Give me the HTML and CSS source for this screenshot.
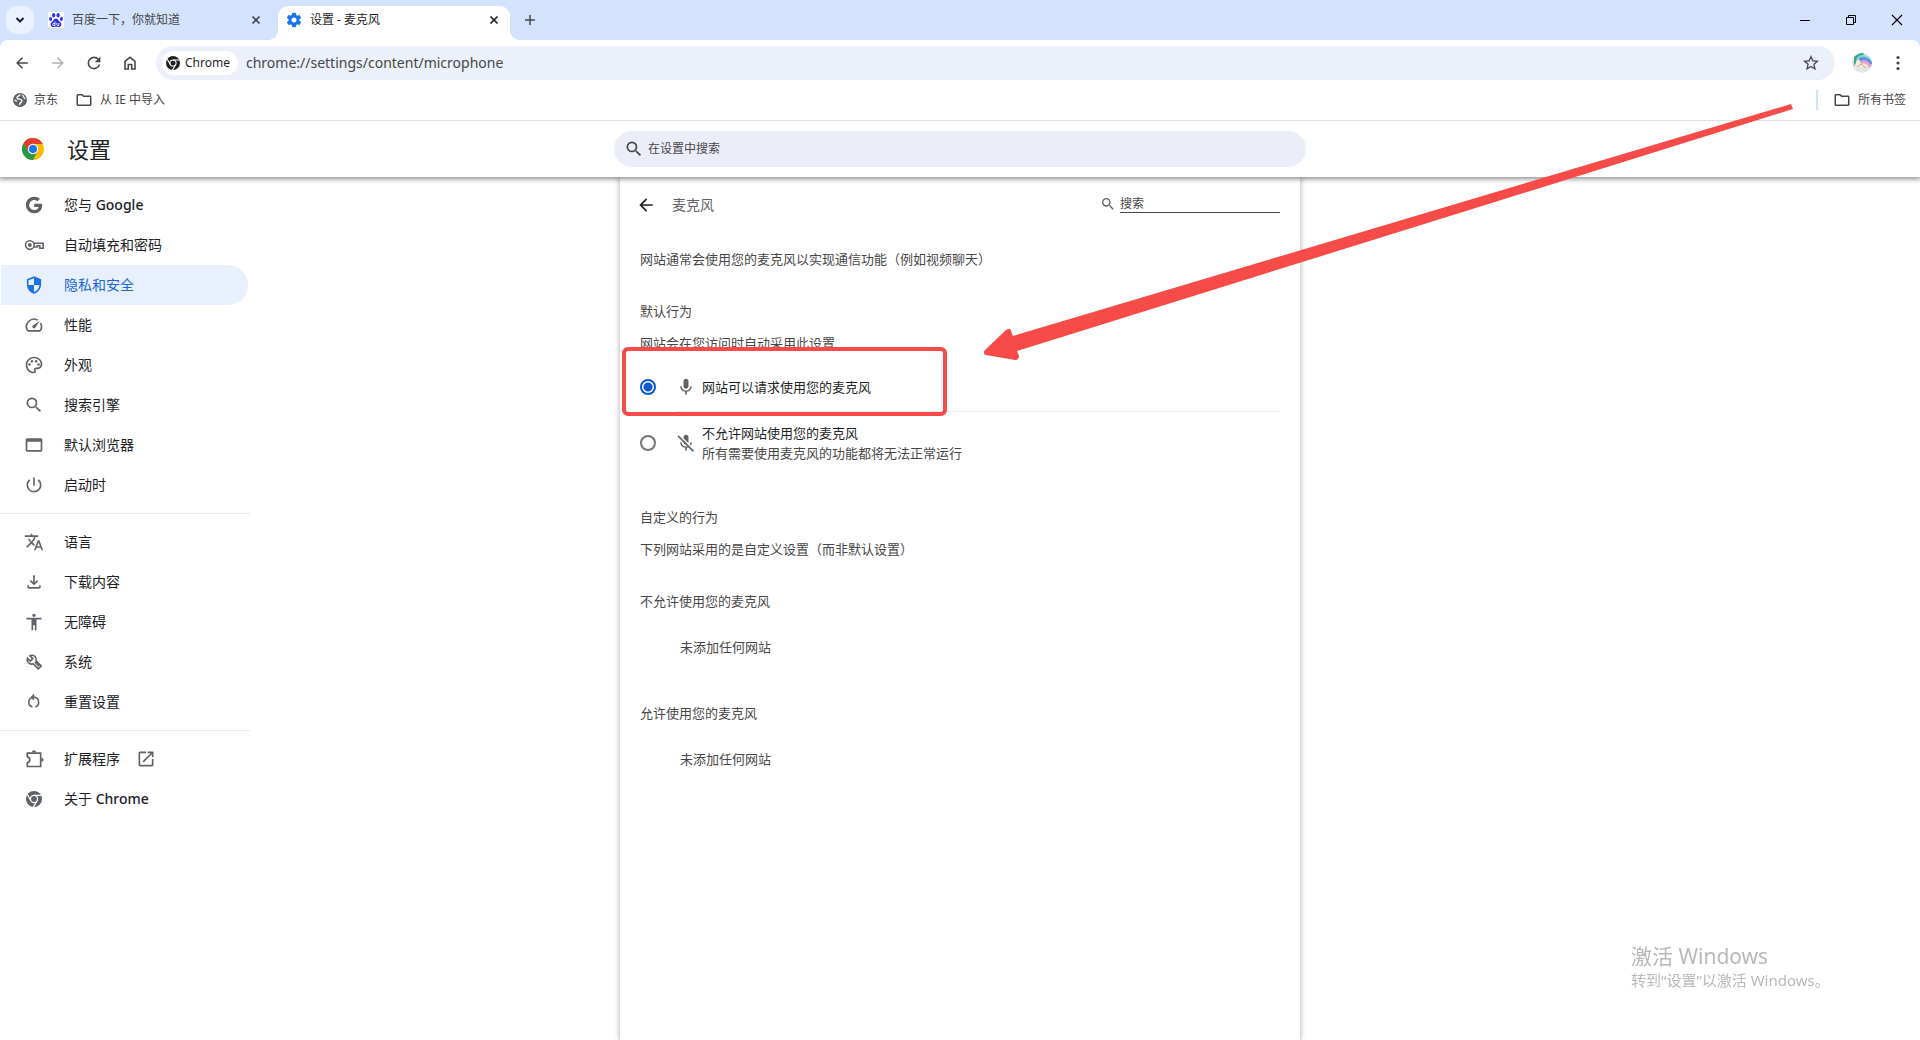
FILE: index.html
```html
<!DOCTYPE html>
<html lang="zh-CN">
<head>
<meta charset="utf-8">
<title>设置 - 麦克风</title>
<link rel="stylesheet" href="styles.css">
</head>
<body>
<svg class="defs" aria-hidden="true">
  <symbol id="close" viewBox="0 0 16 16"><path d="M4.500 4.500l7 7M11.500 4.500l-7 7" fill="none" stroke="currentColor" stroke-width="1.700"/></symbol>
  <symbol id="arrow" viewBox="0 0 24 24"><path d="M20 11H7.830l5.590-5.590L12 4l-8 8 8 8 1.410-1.410L7.830 13H20v-2z"/></symbol>
  <symbol id="search" viewBox="0 0 24 24"><path d="M15.500 14h-.79l-.28-.27A6.470 6.470 0 0 0 16 9.500 6.500 6.500 0 1 0 9.500 16c1.610 0 3.090-.59 4.230-1.570l.27.28v.79l5 4.990L20.490 19l-4.990-5zm-6 0C7.010 14 5 11.990 5 9.500S7.010 5 9.500 5 14 7.010 14 9.500 11.990 14 9.500 14z"/></symbol>
  <symbol id="folder" viewBox="0 0 24 24"><path d="M9.170 6l2 2H20v10H4V6h5.170M10 4H4c-1.100 0-2 .9-2 2v12c0 1.100.9 2 2 2h16c1.100 0 2-.9 2-2V8c0-1.100-.9-2-2-2h-8l-2-2z"/></symbol>
  <symbol id="chrome" viewBox="0 0 24 24"><circle cx="12" cy="12" r="12"/><g fill="none" stroke="#fff" stroke-width="1.800"><circle cx="12" cy="12" r="5.300"/><path d="M12 6.700h11M7.400 14.650L1.900 5.100M16.600 14.650L11.100 24.200"/></g></symbol>
  <symbol id="mic" viewBox="0 0 24 24"><path d="M12 14c1.660 0 3-1.340 3-3V5c0-1.660-1.340-3-3-3S9 3.340 9 5v6c0 1.660 1.340 3 3 3zm5.300-3c0 3-2.540 5.100-5.300 5.100S6.700 14 6.700 11H5c0 3.410 2.720 6.230 6 6.720V21h2v-3.280c3.280-.48 6-3.300 6-6.720h-1.700z"/></symbol>
</svg>

<header class="browser">
  <div class="tabstrip">
    <button class="tab-search" aria-label="搜索标签页"><svg class="i16" viewBox="0 0 16 16"><path d="M4.500 6l3.500 3.500L11.500 6" fill="none" stroke="currentColor" stroke-width="2"/></svg></button>
    <div class="tab">
      <svg class="i16" viewBox="0 0 16 16"><rect width="16" height="16" rx="1" fill="#fff"/><g fill="#2932e1"><ellipse cx="5.700" cy="3.300" rx="1.600" ry="2.300"/><ellipse cx="10.100" cy="3.300" rx="1.600" ry="2.300"/><ellipse cx="2.600" cy="7" rx="1.500" ry="2.100"/><ellipse cx="13.400" cy="7" rx="1.500" ry="2.100"/><path d="M8 6.500c1.500 0 2 1.400 3 2.400 1 1 2.600 2 2.300 3.800-.3 2-2 2.400-3 2.300-1.500-.2-3-.2-4.500 0-1.300.2-3-.4-3.200-2.300-.2-1.800 1.300-2.700 2.300-3.800 1-1 1.600-2.400 3.100-2.400z"/></g><path d="M7 9.500v4H5.800a1 1 0 0 1 0-2.200H7M8.800 11v1.700q0 .9 1 .9h1V11" fill="none" stroke="#fff" stroke-width=".9"/></svg>
      <span class="tab-title">百度一下，你就知道</span>
      <button class="plain" aria-label="关闭"><svg class="i16"><use href="#close"/></svg></button>
    </div>
    <div class="tab tab-active">
      <svg class="i16 gear" viewBox="1 1 22 22"><path d="M19.430 12.980c.04-.32.070-.64.070-.98s-.03-.66-.07-.98l2.110-1.650c.19-.15.240-.42.120-.64l-2-3.460c-.12-.22-.39-.3-.61-.22l-2.490 1c-.52-.4-1.080-.73-1.690-.98l-.38-2.650A.49.490 0 0 0 14 2h-4c-.25 0-.46.180-.49.420l-.38 2.650c-.61.250-1.170.59-1.690.98l-2.490-1c-.23-.09-.49 0-.61.220l-2 3.460c-.13.220-.07.49.120.64l2.110 1.650c-.04.320-.07.650-.07.980s.03.660.070.980l-2.110 1.650c-.19.150-.24.420-.12.640l2 3.460c.12.220.39.300.61.220l2.490-1c.52.400 1.080.73 1.690.98l.38 2.650c.03.240.24.420.49.420h4c.25 0 .46-.18.49-.42l.38-2.650c.61-.25 1.170-.59 1.690-.98l2.490 1c.23.090.49 0 .61-.22l2-3.460c.12-.22.070-.49-.12-.64l-2.110-1.650zM12 15.500c-1.930 0-3.500-1.570-3.500-3.500s1.570-3.500 3.500-3.500 3.500 1.570 3.500 3.500-1.570 3.500-3.500 3.500z"/></svg>
      <span class="tab-title">设置 - 麦克风</span>
      <button class="plain" aria-label="关闭"><svg class="i16"><use href="#close"/></svg></button>
    </div>
    <button class="plain new-tab" aria-label="打开新的标签页"><svg class="i16" viewBox="0 0 16 16"><path d="M8 3v10M3 8h10" stroke="currentColor" stroke-width="1.500"/></svg></button>
    <div class="window-buttons">
      <button class="plain" aria-label="最小化"><svg class="i16" viewBox="0 0 16 16"><path d="M3 8.500h10" stroke="#000"/></svg></button>
      <button class="plain" aria-label="还原"><svg class="i16" viewBox="0 0 16 16"><path d="M3.500 5.500h7v7h-7zM5.500 5V3.500h7v7H11" fill="none" stroke="#000"/></svg></button>
      <button class="plain" aria-label="关闭窗口"><svg class="i16" viewBox="0 0 16 16"><path d="M3 3l10 10M13 3L3 13" stroke="#000" stroke-width="1.200"/></svg></button>
    </div>
  </div>

  <div class="toolbar">
    <div class="nav">
      <button class="plain" aria-label="后退"><svg class="i16" viewBox="1 1 22 22"><use href="#arrow" width="24" height="24"/></svg></button>
      <button class="plain disabled" aria-label="前进" disabled><svg class="i16 flip" viewBox="1 1 22 22"><use href="#arrow" width="24" height="24"/></svg></button>
      <button class="plain" aria-label="重新加载"><svg class="i16" viewBox="2 2 20 20"><path d="M17.650 6.350A7.958 7.958 0 0 0 12 4a8 8 0 1 0 7.730 10h-2.080A5.990 5.990 0 0 1 12 18c-3.310 0-6-2.690-6-6s2.690-6 6-6c1.660 0 3.140.69 4.220 1.780L13 11h7V4l-2.350 2.350z"/></svg></button>
      <button class="plain" aria-label="主页"><svg class="i16" viewBox="0 0 16 16"><path d="M3 14V6.300L8 2.300l5 4V14H9.700V9.500H6.300V14z" fill="none" stroke="currentColor" stroke-width="1.600"/></svg></button>
    </div>
    <div class="omnibox">
      <button class="chip"><svg class="i14"><use href="#chrome"/></svg>Chrome</button>
      <input class="url" aria-label="地址和搜索栏" value="chrome://settings/content/microphone">
      <button class="plain" aria-label="为此标签页添加书签"><svg class="i16" viewBox="2 2 20 20"><path d="M22 9.240l-7.190-.62L12 2 9.190 8.630 2 9.240l5.460 4.730L5.820 21 12 17.270 18.180 21l-1.630-7.030L22 9.240zM12 15.400l-3.760 2.270 1-4.280-3.320-2.880 4.380-.38L12 6.100l1.710 4.040 4.380.38-3.320 2.880 1 4.280L12 15.400z"/></svg></button>
    </div>
    <button class="plain" aria-label="用户"><svg class="i20" viewBox="0 0 20 20"><clipPath id="round"><circle cx="10" cy="10" r="10"/></clipPath><g clip-path="url(#round)"><path fill="#e3e5e6" d="M0 0h20v20H0z"/><path fill="#35a889" d="M2 13V3l6-3h5L6 6z"/><g fill="none" stroke-width="2.500"><path d="M5 7Q10-1 20 8" stroke="#80d4d8"/><path d="M6 9q5-8 14 2" stroke="#5b82dc"/><path d="M9 9q4-4 10 4" stroke="#b59be8"/><path d="M11 10q4-1 7 4" stroke="#f0a7b7"/></g><path fill="#f5eadc" d="M4 8l3-2 2 4 5 1 3 5-3-2-4 1-4-1-3 2 2-4z"/><path d="M5 14l4-3 5 4M8 7l2 4" fill="none" stroke="#ad967c" stroke-width=".7"/></g></svg></button>
    <button class="plain" aria-label="更多"><svg class="i16" viewBox="0 0 16 16"><circle cx="8" cy="2.500" r="1.600"/><circle cx="8" cy="8" r="1.600"/><circle cx="8" cy="13.500" r="1.600"/></svg></button>
  </div>

  <nav class="bookmarks" aria-label="书签">
    <a href="#jd"><svg class="i14 globe" viewBox="0 0 14 14"><circle cx="7" cy="7" r="7"/><path d="M7.500 1.500C6.500 3 4.500 3 4 4.500S6 6 7.500 6.500s2 1.500 1 2.500-2 1-2 3M1.500 7L4 8.500M9.500 2l2.500 4" fill="none" stroke="#fff" stroke-width="1.300"/></svg>京东</a>
    <a href="#ie"><svg class="i18" viewBox="0 0 24 24"><use href="#folder"/></svg>从 IE 中导入</a>
    <a class="all-bookmarks" href="#all"><svg class="i18" viewBox="0 0 24 24"><use href="#folder"/></svg>所有书签</a>
  </nav>
</header>

<header class="settings-header">
  <div class="brand">
    <svg class="logo" viewBox="0 0 24 24"><circle cx="12" cy="12" r="12" fill="#fbbc04"/><path d="M12 6.500h10.600A12 12 0 0 0 1.600 6L7.200 14.700z" fill="#e33b2e"/><path d="M1.600 6a12 12 0 0 0 10.400 18l4.800-9.200L12 17.500l-4.800-2.800z" fill="#279847"/><circle cx="12" cy="12" r="5.600" fill="#fff"/><circle cx="12" cy="12" r="4.400" fill="#1a73e8"/></svg>
    <h1>设置</h1>
  </div>
  <label class="main-search"><svg class="i20"><use href="#search"/></svg><input type="search" placeholder="在设置中搜索" aria-label="在设置中搜索"></label>
</header>

<main class="page">
  <nav class="menu" aria-label="设置">
    <a href="#you"><svg class="i20" viewBox="0 0 24 24"><path d="M12.200 2a10 10 0 1 0 0 20c5.800 0 9.600-4.100 9.600-9.800 0-.7-.1-1.200-.2-1.800h-9.400v4h5.400c-.5 2.200-2.500 3.700-5.200 3.700a6.100 6.100 0 1 1 3.900-10.700l2.900-2.900A10 10 0 0 0 12.200 2z"/></svg><span>您与 <b>Google</b></span></a>
    <a href="#autofill"><svg class="i20" viewBox="0 0 24 24"><g fill="none" stroke="currentColor" stroke-width="1.900"><circle cx="7" cy="12" r="5.200"/><path d="M11.800 9.800h11.200v6h-4v-3h-3v1.500h-4"/></g><circle cx="7" cy="12" r="2.300"/></svg>自动填充和密码</a>
    <a class="selected" href="#privacy" aria-current="page"><svg class="i20" viewBox="0 0 24 24"><path d="M12 1.500L3.500 5v6c0 5.500 3.600 10 8.500 11.500 4.900-1.500 8.500-6 8.500-11.500V5zm0 2.300V12h6.600c-.5 3.900-3.100 7.300-6.600 8.500V12H5.400V6.400z"/></svg>隐私和安全</a>
    <a href="#performance"><svg class="i20" viewBox="0 0 24 24"><path d="M20.380 8.570l-1.230 1.850a8 8 0 0 1-.22 7.580H5.070A8 8 0 0 1 15.580 6.850l1.850-1.230A10 10 0 0 0 3.350 19a2 2 0 0 0 1.720 1h13.850a2 2 0 0 0 1.740-1 10 10 0 0 0-.27-10.440zm-9.790 6.840a2 2 0 0 0 2.830 0l5.660-8.490-8.490 5.660a2 2 0 0 0 0 2.830z"/></svg>性能</a>
    <a href="#appearance"><svg class="i20" viewBox="0 0 24 24"><path d="M12 22C6.490 22 2 17.510 2 12S6.490 2 12 2s10 4.040 10 9c0 3.310-2.690 6-6 6h-1.770c-.28 0-.5.220-.5.500 0 .12.050.23.130.33.410.47.640 1.060.64 1.670A2.500 2.500 0 0 1 12 22zm0-18c-4.410 0-8 3.590-8 8s3.590 8 8 8c.28 0 .5-.22.500-.5a.54.540 0 0 0-.14-.35c-.41-.46-.63-1.050-.63-1.650a2.500 2.500 0 0 1 2.500-2.500H16c2.210 0 4-1.790 4-4 0-3.860-3.590-7-8-7z"/><circle cx="6.500" cy="11.500" r="1.500"/><circle cx="9.500" cy="7.500" r="1.500"/><circle cx="14.500" cy="7.500" r="1.500"/><circle cx="17.500" cy="11.500" r="1.500"/></svg>外观</a>
    <a href="#search-engine"><svg class="i20"><use href="#search"/></svg>搜索引擎</a>
    <a href="#default-browser"><svg class="i20" viewBox="0 0 24 24"><path d="M20 4H4c-1.100 0-2 .9-2 2v12c0 1.100.9 2 2 2h16c1.100 0 2-.9 2-2V6c0-1.100-.9-2-2-2zm0 14H4V8h16v10z"/></svg>默认浏览器</a>
    <a href="#startup"><svg class="i20" viewBox="0 0 24 24"><path d="M13 3h-2v10h2V3zm4.830 2.170l-1.420 1.420A6.920 6.920 0 0 1 19 12c0 3.870-3.130 7-7 7A6.995 6.995 0 0 1 7.580 6.580L6.170 5.170A8.932 8.932 0 0 0 3 12a9 9 0 0 0 18 0c0-2.740-1.230-5.180-3.170-6.830z"/></svg>启动时</a>
    <hr>
    <a href="#languages"><svg class="i20" viewBox="0 0 24 24"><path d="M12.870 15.070l-2.540-2.510.03-.03A17.520 17.520 0 0 0 14.070 6H17V4h-7V2H8v2H1v1.990h11.170C11.500 7.920 10.440 9.750 9 11.350 8.070 10.320 7.300 9.190 6.690 8h-2c.73 1.630 1.730 3.170 2.980 4.560l-5.090 5.020L4 19l5-5 3.110 3.110.76-2.040zM18.500 10h-2L12 22h2l1.120-3h4.750L21 22h2l-4.500-12zm-2.620 7l1.620-4.330L19.120 17h-3.240z"/></svg>语言</a>
    <a href="#downloads"><svg class="i20" viewBox="0 0 24 24"><path d="M12 16l-5-5 1.400-1.450 2.600 2.600V4h2v8.150l2.600-2.600L17 11zm-6 4c-1.100 0-2-.9-2-2v-2h2v2h12v-2h2v2c0 1.100-.9 2-2 2z"/></svg>下载内容</a>
    <a href="#accessibility"><svg class="i20" viewBox="0 0 24 24"><path d="M12 2c1.100 0 2 .9 2 2s-.9 2-2 2-2-.9-2-2 .9-2 2-2zm9 7h-6v13h-2v-6h-2v6H9V9H3V7h18v2z"/></svg>无障碍</a>
    <a href="#system"><svg class="i20" viewBox="0 0 24 24"><path d="M8.200 4.200a5 5 0 0 1 6.200 6.500l6.200 6.200-3.400 3.400-6.300-6.200A5.200 5.200 0 0 1 4.200 7.500l3.400 3.300 2.900-2.900-3.300-3.300zM13 12l5 5" fill="none" stroke="currentColor" stroke-width="2"/></svg>系统</a>
    <a href="#reset"><svg class="i20" viewBox="-2 -1 28 28"><path d="M9 6.500A7.200 7.200 0 0 0 9.800 20M14 20a7.200 7.200 0 0 0-2-13.800H9M12 2.500L8.600 6.200 12 9.800" fill="none" stroke="currentColor" stroke-width="2.200"/></svg>重置设置</a>
    <hr>
    <a href="#extensions"><svg class="i20" viewBox="0 0 24 24"><path d="M4 5h16v16H4v-4.500c4-1 4-6 0-7z" fill="none" stroke="currentColor" stroke-width="2"/><path d="M9.500 4a2.500 2.500 0 0 1 5 0zM21 10.500a2.500 2.500 0 0 1 0 5z"/></svg>扩展程序<svg class="i20 external" viewBox="0 0 24 24"><path d="M19 19H5V5h7V3H5a2 2 0 0 0-2 2v14a2 2 0 0 0 2 2h14c1.100 0 2-.9 2-2v-7h-2v7zM14 3v2h3.590l-9.830 9.830 1.410 1.410L19 6.410V10h2V3h-7z"/></svg></a>
    <a href="#about"><svg class="i16 about-icon"><use href="#chrome"/></svg><span>关于 <b>Chrome</b></span></a>
  </nav>

  <section class="card">
    <div class="card-head">
      <button class="plain back" aria-label="返回"><svg class="i20"><use href="#arrow"/></svg></button>
      <h2>麦克风</h2>
      <label class="card-search"><svg class="i16"><use href="#search"/></svg><input type="search" placeholder="搜索" aria-label="搜索"></label>
    </div>
    <p class="intro">网站通常会使用您的麦克风以实现通信功能（例如视频聊天）</p>
    <h3>默认行为</h3>
    <p class="note">网站会在您访问时自动采用此设置</p>
    <div class="options">
      <label class="option">
        <input type="radio" name="mic" checked>
        <svg class="i20"><use href="#mic"/></svg>
        <span>网站可以请求使用您的麦克风</span>
      </label>
      <span class="highlight"></span>
      <label class="option option-tall">
        <input type="radio" name="mic">
        <svg class="i20" viewBox="0 0 24 24"><use href="#mic"/><path d="M2 3.500L20 21.500" stroke="#fff" stroke-width="2" transform="translate(1.400 -1.400)"/><path d="M2.500 3.500L21 22" stroke="currentColor" stroke-width="1.900"/></svg>
        <span>不允许网站使用您的麦克风<small>所有需要使用麦克风的功能都将无法正常运行</small></span>
      </label>
    </div>
    <h3>自定义的行为</h3>
    <p class="note">下列网站采用的是自定义设置（而非默认设置）</p>
    <h3>不允许使用您的麦克风</h3>
    <p class="empty">未添加任何网站</p>
    <h3>允许使用您的麦克风</h3>
    <p class="empty">未添加任何网站</p>
  </section>
  <svg class="pointer" viewBox="984 104 810 256" aria-hidden="true"><path d="M985 350L1006 330Q1010 327 1011 331L1013 336L1791 104L1793 109L1017 351L1019 356Q1019 360 1015 360L986 355Q982 354 985 350z" fill="#f64b48"/></svg>
</main>

<aside class="watermark"><p class="wm-title">激活 Windows</p><p class="wm-text">转到“设置”以激活 Windows。</p></aside>
</body>
</html>
```
FILE: styles.css
```css
* { box-sizing: border-box; }
body {
  margin: 0;
  min-height: 100vh;
  display: flex;
  flex-direction: column;
  background: #fff;
  color: #202124;
  font: 13px/20px "Noto Sans", "Noto Sans CJK SC", sans-serif;
}
h1, h2, h3, p { margin: 0; font-weight: 400; }
a { color: inherit; text-decoration: none; }
button, input { font: inherit; color: inherit; }
svg { fill: currentColor; flex: none; display: block; }
.defs { position: absolute; width: 0; height: 0; }
.i14 { width: 14px; height: 14px; }
.i16 { width: 16px; height: 16px; }
.i18 { width: 18px; height: 18px; }
.i20 { width: 20px; height: 20px; }
.plain { border: 0; padding: 0; background: none; }
input { border: 0; padding: 0; background: none; outline: 0; min-width: 0; }
input::placeholder { color: #474747; opacity: 1; }

/* Browser frame */
.browser { background: #d3e2fd; }
.tabstrip { display: flex; height: 40px; padding-left: 6px; align-items: center; }
.tab-search {
  width: 28px;
  height: 28px;
  border: 0;
  border-radius: 10px;
  padding: 0 6px;
  background: #ebf1fe;
}
.tab {
  display: flex;
  align-items: center;
  width: 244px;
  height: 34px;
  padding: 0 14px;
  gap: 8px;
  font-size: 12px;
  color: #474747;
}
.tab-title { flex: 1; white-space: nowrap; }
.tab-active {
  position: relative;
  align-self: flex-end;
  width: 232px;
  padding: 0 8px 6px;
  border-radius: 10px 10px 0 0;
  background: #fff;
  color: #1f1f1f;
}
.tab-active::before, .tab-active::after {
  content: "";
  position: absolute;
  bottom: 0;
  width: 10px;
  height: 10px;
}
.tab-active::before { right: 100%; background: radial-gradient(circle at 0 0, transparent 10px, #fff 10px); }
.tab-active::after { left: 100%; background: radial-gradient(circle at 100% 0, transparent 10px, #fff 10px); }
.gear { color: #1a73e8; }
.new-tab { margin-left: 12px; color: #474747; }
.window-buttons { display: flex; gap: 30px; margin-left: auto; padding-right: 15px; }
.toolbar {
  display: flex;
  align-items: center;
  height: 46px;
  padding: 0 14px;
  border-radius: 8px 8px 0 0;
  background: #fff;
  color: #474747;
}
.nav { display: flex; gap: 20px; margin-right: 18px; }
.flip { transform: scaleX(-1); }
.disabled { color: #b0b0b0; }
.omnibox {
  display: flex;
  flex: 1;
  align-items: center;
  height: 34px;
  margin-right: 17px;
  padding: 0 16px 0 6px;
  border-radius: 17px;
  background: #ebf0fa;
}
.chip {
  display: flex;
  align-items: center;
  gap: 5px;
  height: 24px;
  padding: 0 8px 0 4px;
  border: 0;
  border-radius: 12px;
  background: #fff;
  color: #1f1f1f;
  font-size: 12px;
}
.url { flex: 1; margin-left: 8px; font-size: 14px; }
.toolbar > .plain + .plain { margin-left: 18px; }
.bookmarks {
  display: flex;
  align-items: center;
  height: 35px;
  padding: 0 14px 6px 13px;
  gap: 17px;
  border-bottom: 1px solid #dfe1e4;
  background: #fff;
  color: #474747;
  font-size: 12px;
}
.bookmarks a { display: flex; align-items: center; gap: 7px; }
.bookmarks .all-bookmarks {
  margin-left: auto;
  padding-left: 15px;
  border-left: 2px solid #d3e2fd;
}
.globe { color: #5f6368; }

/* Settings header */
.settings-header {
  position: relative;
  z-index: 1;
  display: grid;
  grid-template-columns: 1fr minmax(0, 692px) 1fr;
  align-items: center;
  height: 56px;
  background: #fff;
  box-shadow: 0 1px 5px 1px rgba(0, 0, 0, .45);
  clip-path: inset(0 0 -8px 0);
}
.brand { display: flex; align-items: center; padding-left: 22px; gap: 23px; }
.logo { width: 22px; height: 22px; }
h1 { font-size: 22px; line-height: 28px; }
.main-search {
  display: flex;
  align-items: center;
  height: 36px;
  padding: 0 10px;
  gap: 4px;
  border-radius: 18px;
  background: #ebeef8;
  color: #474747;
  font-size: 12px;
}
.main-search input { flex: 1; }

/* Page body */
.page {
  position: relative;
  display: grid;
  grid-template-columns: 1fr minmax(0, 680px) 1fr;
  flex: 1;
}
.menu { padding-top: 8px; width: 250px; font-size: 14px; }
.menu a {
  display: flex;
  align-items: center;
  height: 40px;
  margin: 0 2px 0 1px;
  padding-left: 23px;
  gap: 20px;
}
.menu b { font-weight: 500; }
.menu svg { color: #5f6368; }
.menu .selected { border-radius: 0 20px 20px 0; background: #e8effd; color: #1967d2; }
.menu .selected svg { color: #1a73e8; }
.menu .external { margin-left: -4px; }
.menu .about-icon { margin: 0 2px; }
.menu hr { height: 1px; margin: 8px 0; border: 0; background: #e8eaed; }
.card {
  padding: 0 20px 32px;
  background: #fff;
  color: #474747;
  box-shadow: 0 0 5px 1px rgba(0, 0, 0, .25);
}
.card-head { display: flex; align-items: center; height: 56px; }
.back { margin: 0 16px 0 -4px; color: #202124; }
h2 { font-size: 14px; color: #5f6368; }
.card-search { display: flex; align-items: center; gap: 4px; margin: 0 0 2px auto; font-size: 12px; }
.card-search svg { color: #5f6368; }
.card-search input { width: 160px; height: 18px; border-bottom: 1px solid #474747; }
.intro { margin-top: 16px; }
h3 { margin-top: 32px; font-size: 13px; }
.note { margin-top: 12px; }
.options { position: relative; margin-top: 10px; }
.option { display: flex; align-items: center; height: 48px; color: #1f1f1f; }
.option input {
  appearance: none;
  width: 16px;
  height: 16px;
  margin: 0 20px 0 0;
  border: 2px solid #757575;
  border-radius: 50%;
}
.option input:checked { border-color: #0b57d0; background: radial-gradient(circle, #0b57d0 4px, transparent 5px); }
.option svg { margin-right: 6px; color: #5f6368; }
.option-tall { height: 64px; }
.option small { display: block; font-size: 13px; color: #474747; }
.options::before {
  content: "";
  position: absolute;
  top: 48px;
  left: 36px;
  right: 0;
  height: 1px;
  background: #e8eaed;
}
.highlight {
  position: absolute;
  top: -16px;
  left: -18px;
  width: 325px;
  height: 69px;
  border: 4px solid #f64b48;
  border-radius: 6px;
}
.empty { margin: 26px 0 0 40px; }
.empty + h3 { margin-top: 46px; }

/* Overlays */
.pointer {
  position: absolute;
  z-index: 2;
  top: -73px;
  left: calc(50% + 24px);
  width: 810px;
  height: 256px;
}
.watermark { position: fixed; right: 89px; bottom: 50px; color: #b9b9b9; width: 200px; white-space: nowrap; }
.wm-title { font-size: 21px; line-height: 28px; }
.wm-text { font-size: 15px; line-height: 20px; }
```
